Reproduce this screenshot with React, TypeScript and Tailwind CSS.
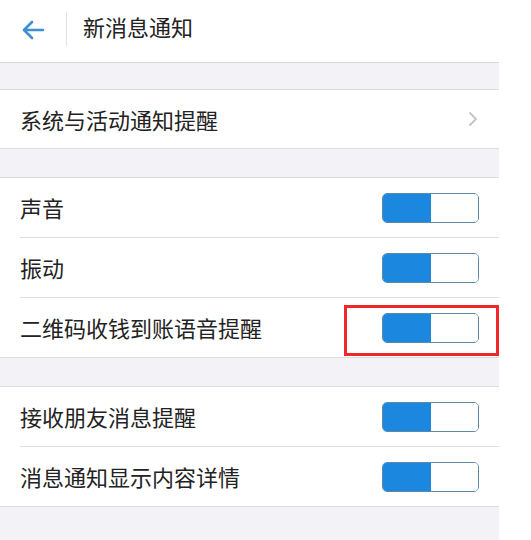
import React from "react";

function Toggle() {
  return (
    <div className="flex h-[30px] w-[97px] overflow-hidden rounded-[5px] border border-[#5f8aa3]">
      <div className="h-full w-[48px] bg-[#1c87df]" />
      <div className="h-full flex-1 bg-white" />
    </div>
  );
}

function Row({ label, children, sep, tall }: { label: string; children?: React.ReactNode; sep?: boolean; tall?: boolean }) {
  return (
    <div className="relative">
      <div className={`flex items-center justify-between pl-[20px] pr-[20px] ${tall ? "h-[59px]" : "h-[58px]"}`}>
        <span className="text-[22px] text-[#222]">{label}</span>
        {children}
      </div>
      {sep && <div className="ml-[20px] h-px bg-[#dedede]" />}
    </div>
  );
}

export default function App() {
  return (
    <div
      className="flex h-[540px] w-[531px] overflow-hidden bg-white"
      style={{ fontFamily: '"Noto Sans CJK SC", "Noto Sans", sans-serif' }}
    >
      <div className="flex w-[499px] flex-col bg-[#f3f3f7]">
        {/* header */}
        <div className="flex h-[63px] items-center border-b border-[#d8d8dc] bg-white">
          <div className="mb-[2px] flex w-[66px] items-center pl-[21px]">
            <svg width="24" height="22" viewBox="0 0 24 22" fill="none">
              <path d="M22 11H3M11 3L3 11L11 19" stroke="#3b8fd2" strokeWidth="2.6" strokeLinecap="round" strokeLinejoin="round" />
            </svg>
          </div>
          <div className="mb-[4px] h-[34px] w-px bg-[#e2e2e2]" />
          <span className="mb-[10px] ml-[16px] text-[22px] text-[#222]">新消息通知</span>
        </div>
        <div className="h-[26px]" />
        <div className="border-y border-[#dcdcdf] bg-white">
          <Row label="系统与活动通知提醒">
            <svg width="10" height="16" viewBox="0 0 10 16" fill="none" className="mr-[1px]">
              <path d="M1.5 1.5L8 8L1.5 14.5" stroke="#c2c2c2" strokeWidth="1.8" />
            </svg>
          </Row>
        </div>
        <div className="h-[28px]" />
        <div className="border-y border-[#dcdcdf] bg-white">
          <Row label="声音" sep tall>
            <Toggle />
          </Row>
          <Row label="振动" sep tall>
            <Toggle />
          </Row>
          <div className="relative">
            <Row label="二维码收钱到账语音提醒" tall>
              <Toggle />
            </Row>
            <div className="absolute left-[344px] top-[7px] h-[51px] w-[155px] border-[3px] border-[#f0262b]" />
          </div>
        </div>
        <div className="h-[28px]" />
        <div className="border-y border-[#dcdcdf] bg-white">
          <Row label="接收朋友消息提醒" sep tall>
            <Toggle />
          </Row>
          <Row label="消息通知显示内容详情" tall>
            <Toggle />
          </Row>
        </div>
        <div className="flex-1" />
      </div>
    </div>
  );
}
